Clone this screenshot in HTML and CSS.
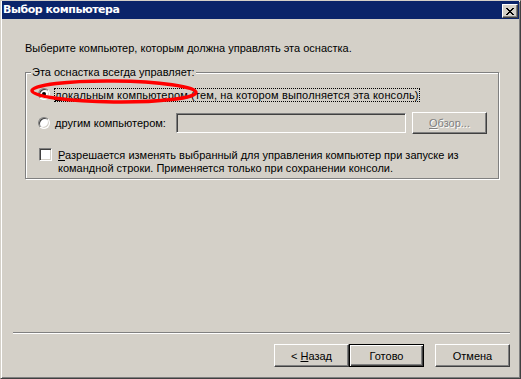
FILE: index.html
```html
<!DOCTYPE html>
<html lang="ru">
<head>
    <meta charset="UTF-8">
    <title>Выбор компьютера</title>
    <link rel="stylesheet" href="styles.css">
</head>
<body>
    <div class="window">
        <div class="titlebar">
            <span class="title">Выбор компьютера</span>
            <span class="close-btn">
                <svg width="8" height="7" viewBox="0 0 8 7" shape-rendering="crispEdges">
                    <path fill="#000" d="M0 0h2v1H0z M6 0h2v1H6z M1 1h2v1H1z M5 1h2v1H5z M2 2h4v1H2z M3 3h2v1H3z M2 4h4v1H2z M1 5h2v1H1z M5 5h2v1H5z M0 6h2v1H0z M6 6h2v1H6z"/>
                </svg>
            </span>
        </div>

        <div class="content">
            <p class="intro">Выберите компьютер, которым должна управлять эта оснастка.</p>

            <div class="group">
                <span class="group-title">Эта оснастка всегда управляет:</span>

                <div class="option option-local">
                    <span class="radio checked"></span>
                    <span class="label focused"><u>л</u>окальным компьютером (тем, на котором выполняется эта консоль)</span>
                </div>

                <div class="option option-remote">
                    <span class="radio"></span>
                    <span class="label label-remote"><u>д</u>ругим компьютером:</span>
                    <span class="textbox"></span>
                    <span class="btn btn-browse disabled"><span><u>О</u>бзор...</span></span>
                </div>

                <div class="option option-cmd">
                    <span class="checkbox"></span>
                    <span class="cmd-text"><u>Р</u>азрешается изменять выбранный для управления компьютер при запуске из<br>командной строки. Применяется только при сохранении консоли.</span>
                </div>
            </div>
        </div>

        <div class="footer">
            <div class="separator"></div>
            <div class="buttons">
                <span class="btn"><span>&lt; <u>Н</u>азад</span></span>
                <span class="btn btn-default"><span>Готово</span></span>
                <span class="btn btn-cancel"><span>Отмена</span></span>
            </div>
        </div>

        <!-- red marker drawn over the first option -->
        <svg class="marker" width="172" height="29" viewBox="0 0 172 29">
            <ellipse cx="85" cy="13.5" rx="82" ry="10.5" fill="none" stroke="#ff0000" stroke-width="3.5" transform="rotate(0.6 85 13.5)"/>
        </svg>
    </div>
</body>
</html>
```

FILE: styles.css
```css
* {
    box-sizing: border-box;
}

html, body {
    margin: 0;
    padding: 0;
    background: #d4d0c8;
    width: 521px;
    height: 379px;
    overflow: hidden;
}

body {
    font-family: 'Liberation Sans', Arial, sans-serif;
    font-size: 11px;
    color: #000;
}

u {
    text-decoration: underline;
    text-underline-offset: 1px;
}

/* Classic window frame */
.window {
    position: relative;
    width: 521px;
    height: 379px;
    display: flex;
    flex-direction: column;
    background: #d4d0c8;
    border: 1px solid;
    border-color: #d4d0c8 #404040 #404040 #d4d0c8;
    box-shadow: inset 1px 1px #fff, inset -1px -1px #808080;
}

.titlebar {
    height: 18px;
    margin: 0 1px;
    padding: 0 1px 0 1px;
    background: #0a246a;
    display: flex;
    align-items: flex-start;
    justify-content: space-between;
}

.title {
    font-family: 'DejaVu Sans', sans-serif;
    font-weight: bold;
    font-size: 11px;
    letter-spacing: -0.45px;
    line-height: 18px;
    color: #fff;
}

.close-btn {
    width: 16px;
    height: 14px;
    margin-top: 3px;
    display: flex;
    align-items: center;
    justify-content: center;
    background: #d4d0c8;
    border: 1px solid;
    border-color: #fff #404040 #404040 #fff;
    box-shadow: inset -1px -1px #808080;
}

.close-btn svg {
    display: block;
}

/* Dialog body */
.content {
    flex: 1;
    padding: 23px 21px 0 24px;
}

.intro {
    margin: 0;
    line-height: 13px;
}

.group {
    position: relative;
    margin-top: 17px;
    width: 474px;
    padding: 15px 0 3px 12px;
    border: 1px solid #808080;
    box-shadow: inset 1px 1px #fff, 1px 1px #fff;
}

.group-title {
    position: absolute;
    top: -7px;
    left: 5px;
    padding: 0 1px;
    line-height: 13px;
    background: #d4d0c8;
}

.option {
    display: flex;
    align-items: center;
}

.option-local {
    height: 14px;
    align-items: flex-start;
}

.option-remote {
    margin-top: 10px;
    height: 22px;
}

.option-cmd {
    margin-top: 14px;
    align-items: flex-start;
}

.radio {
    flex: 0 0 12px;
    width: 12px;
    height: 12px;
    margin-right: 4px;
    border-radius: 50%;
    background: #fff;
    border: 1px solid;
    border-color: #808080 #fff #fff #808080;
    box-shadow: inset 1px 1px #404040, inset -1px -1px #d4d0c8;
    display: flex;
    align-items: center;
    justify-content: center;
}

.radio.checked::after {
    content: '';
    width: 4px;
    height: 4px;
    border-radius: 50%;
    background: #000;
}

.label {
    line-height: 12px;
    border: 1px solid transparent;
    white-space: nowrap;
}

.label.focused {
    border: 1px dotted #000;
    letter-spacing: 0.15px;
}

.label-remote {
    flex: 0 0 122px;
}

.textbox {
    width: 230px;
    height: 20px;
    background: #d4d0c8;
    border: 1px solid;
    border-color: #808080 #fff #fff #808080;
    box-shadow: inset 1px 1px #404040, inset -1px -1px #d4d0c8;
}

.checkbox {
    flex: 0 0 13px;
    width: 13px;
    height: 13px;
    margin-left: 1px;
    background: #fff;
    border: 1px solid;
    border-color: #808080 #fff #fff #808080;
    box-shadow: inset 1px 1px #404040, inset -1px -1px #d4d0c8;
}

.cmd-text {
    margin: 1px 0 0 6px;
    line-height: 13px;
    white-space: nowrap;
}

/* Buttons */
.btn {
    width: 75px;
    height: 23px;
    display: flex;
    align-items: center;
    justify-content: center;
    background: #d4d0c8;
    border: 1px solid;
    border-color: #fff #404040 #404040 #fff;
    box-shadow: inset -1px -1px #808080;
    white-space: pre;
}

.btn-browse {
    height: 22px;
    margin-left: 6px;
}

.btn.disabled {
    color: #808080;
    text-shadow: 1px 1px 0 #fff;
}

.btn-default {
    border: 1px solid #000;
    box-shadow: inset 1px 1px #fff, inset -1px -1px #404040, inset -2px -2px #808080;
}

.btn-cancel {
    margin-left: 11px;
}

.footer {
    padding: 0 10px 11px 12px;
}

.separator {
    border-top: 1px solid #808080;
    border-bottom: 1px solid #fff;
}

.buttons {
    margin-top: 10px;
    display: flex;
    justify-content: flex-end;
}

.marker {
    position: absolute;
    left: 28px;
    top: 77px;
    pointer-events: none;
}
```
